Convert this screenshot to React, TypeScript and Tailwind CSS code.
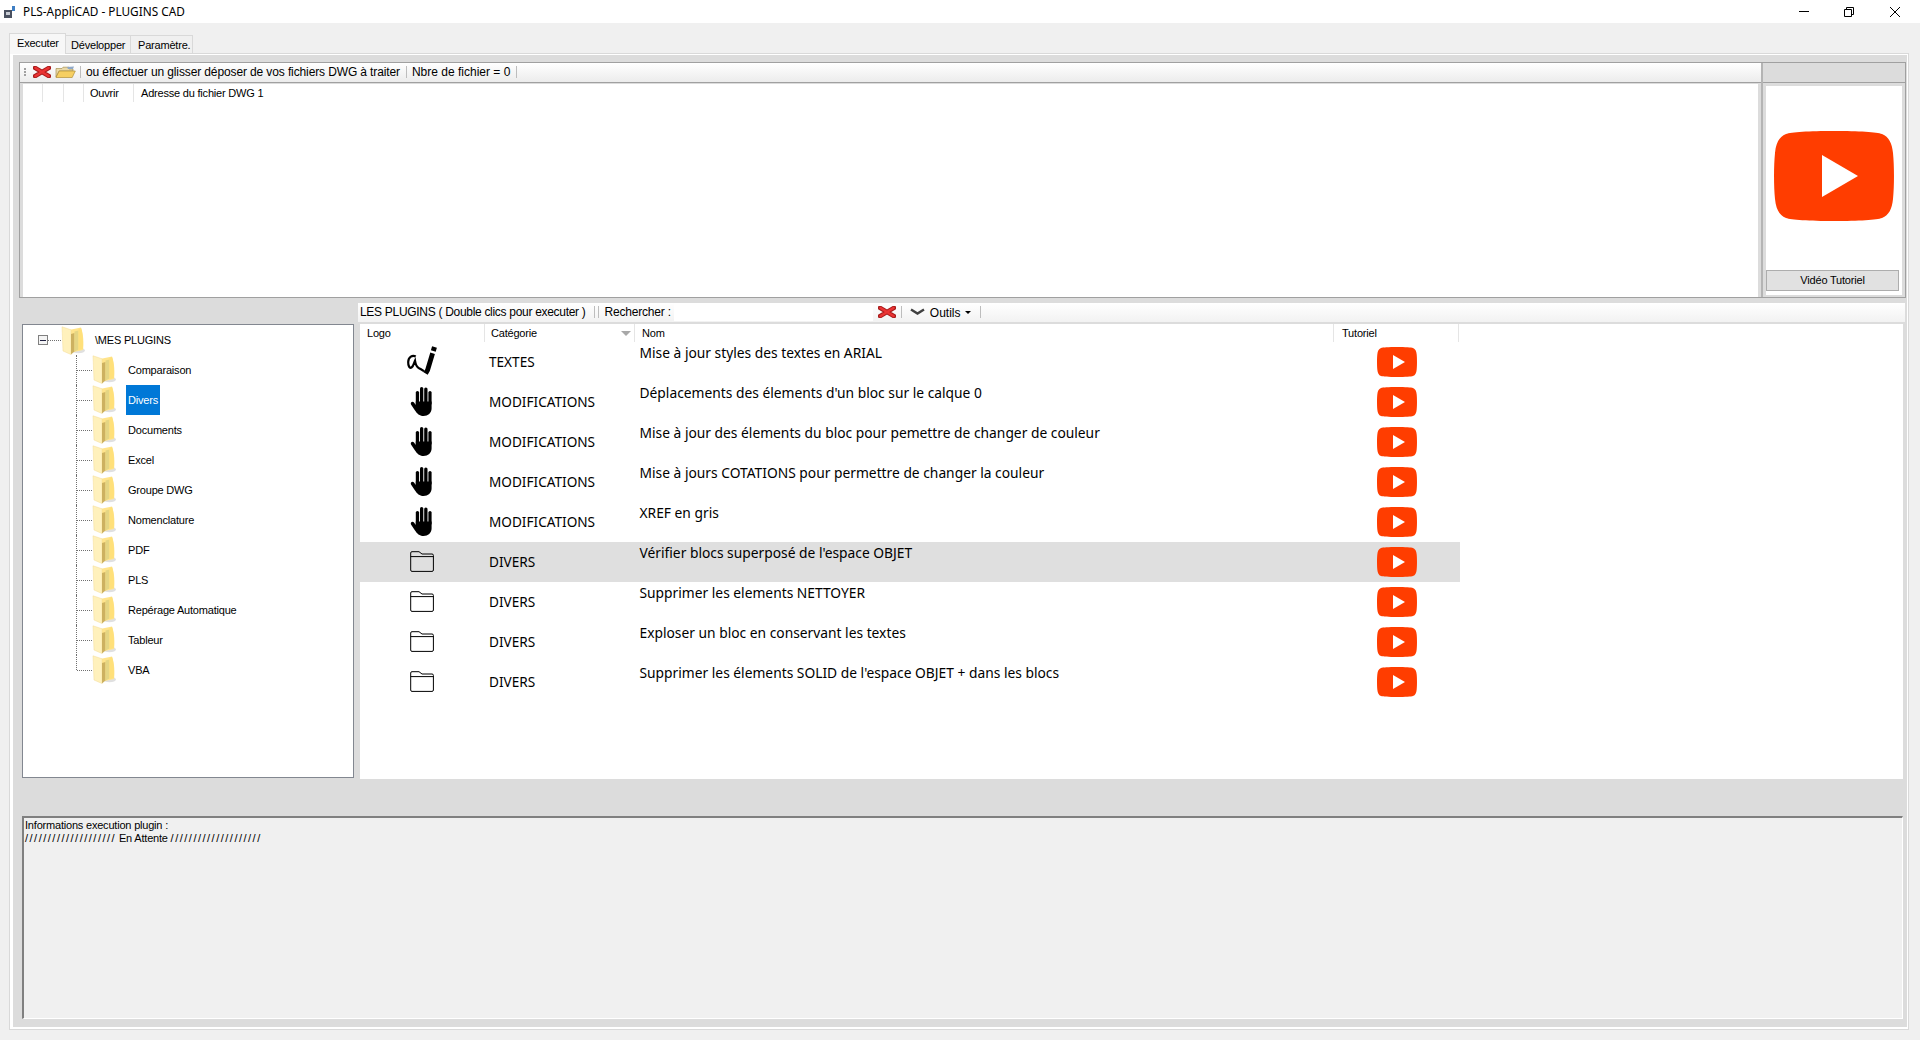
import { FC } from 'react';

const sans = "font-['Liberation_Sans',sans-serif]";
const segoe = "font-['Noto_Sans',sans-serif]";
const small = 'text-[11px] tracking-[-0.2px]';

const folders = ['Comparaison', 'Divers', 'Documents', 'Excel', 'Groupe DWG', 'Nomenclature', 'PDF', 'PLS', 'Repérage Automatique', 'Tableur', 'VBA'];

const plugins = [
  { icon: 'pen', cat: 'TEXTES', name: 'Mise à jour styles des textes en ARIAL' },
  { icon: 'hand', cat: 'MODIFICATIONS', name: "Déplacements des élements d'un bloc sur le calque 0" },
  { icon: 'hand', cat: 'MODIFICATIONS', name: 'Mise à jour des élements du bloc pour pemettre de changer de couleur' },
  { icon: 'hand', cat: 'MODIFICATIONS', name: 'Mise à jours COTATIONS pour permettre de changer la couleur' },
  { icon: 'hand', cat: 'MODIFICATIONS', name: 'XREF en gris' },
  { icon: 'folder', cat: 'DIVERS', name: "Vérifier blocs superposé de l'espace OBJET", selected: true },
  { icon: 'folder', cat: 'DIVERS', name: 'Supprimer les elements NETTOYER' },
  { icon: 'folder', cat: 'DIVERS', name: 'Exploser un bloc en conservant les textes' },
  { icon: 'folder', cat: 'DIVERS', name: "Supprimer les élements SOLID de l'espace OBJET + dans les blocs" },
];

function PlayLogo({ className }: { className: string }) {
  return (
    <svg viewBox="0 0 120 90" className={className}>
      <path
        fill="#ff3d00"
        d="M60 0C85 0 103 1 108 3C115 6 118 12 119 22C120.3 35 120.3 55 119 68C118 78 115 84 108 87C103 89 85 90 60 90C35 90 17 89 12 87C5 84 2 78 1 68C-.3 55-.3 35 1 22C2 12 5 6 12 3C17 1 35 0 60 0Z"
      />
      <polygon fill="#fff" points="48,24 84,45 48,66" />
    </svg>
  );
}

function RedCross({ className }: { className: string }) {
  return (
    <svg viewBox="0 0 18 12" className={className}>
      <path d="M2 1.8L16 10.2M16 1.8L2 10.2" stroke="#a81c1c" strokeWidth="4.4" strokeLinecap="round" />
      <path d="M2.5 2L15.5 10M15.5 2L2.5 10" stroke="#ea3434" strokeWidth="2.6" strokeLinecap="round" />
    </svg>
  );
}

function OpenFolder({ className }: { className: string }) {
  return (
    <svg viewBox="0 0 21 12" className={className}>
      <path d="M1 2.5H7L8 1.2H14V3H18V5H4L1 11Z" fill="#e9d9a8" stroke="#a89050" strokeWidth=".7" />
      <path d="M12 1L19 .5L18 3H13Z" fill="#8fa8c8" />
      <path d="M4.2 5H20.3L17.2 11.5H1Z" fill="#f6cf62" stroke="#b08f3a" strokeWidth=".7" />
    </svg>
  );
}

function TreeFolder() {
  return (
    <svg viewBox="0 0 24 29" className="w-[24px] h-[29px] shrink-0">
      <ellipse cx="17.5" cy="24.5" rx="6.5" ry="2.8" fill="#e0e0e0" />
      <path d="M8 4L20 1.5C22.5 8 22.8 18 22 24L8 27Z" fill="#ffe48c" />
      <path d="M1 .8L10 3.8V28.5L2 25Z" fill="#fff1bc" stroke="#f2dc98" strokeWidth=".5" />
      <path d="M10 8L13.5 7V25.5L10 28.5Z" fill="#cdb160" />
      <path d="M13.5 5.5L17.5 4.5V23.5L13.5 25.5Z" fill="#e4d584" />
      <path d="M17.5 3L20 2C22 8 22.3 17 21.8 23L17.5 24Z" fill="#ffe07a" />
    </svg>
  );
}

function PenIcon() {
  return (
    <svg viewBox="0 0 30 30" className="w-[30px] h-[30px]">
      <path d="M27.5 1L26.3 5" stroke="#000" strokeWidth="5" />
      <path d="M25.6 7.2L20.6 24L18.6 27.5" stroke="#000" strokeWidth="4.8" fill="none" />
      <path
        d="M8.7 10.5C5.5 8.5 1.4 11 1.2 16C1.1 20 2.5 22.6 4.5 21.5C6.5 20.4 7 16.8 8 14.7C8.5 18 9.5 21.2 12 22.2C14 23 15.5 24.2 17 25.3"
        stroke="#000"
        strokeWidth="2.2"
        fill="none"
      />
    </svg>
  );
}

function HandIcon() {
  return (
    <svg viewBox="0 0 24 30" className="w-[24px] h-[30px]">
      <rect x="5.8" y="5" width="3.3" height="15" rx="1.6" />
      <rect x="10" y="1" width="3.3" height="17" rx="1.6" />
      <rect x="14.2" y="1.5" width="3.3" height="17" rx="1.6" />
      <rect x="18.4" y="5" width="3.2" height="14" rx="1.6" />
      <path d="M5.8 15.5H21.6V22.5C21.6 27 18 30 13.5 30C9.5 30 7 27.5 5 24.5L1 18.5C0 16.5 2.5 14.8 4 16.5L5.8 19Z" />
    </svg>
  );
}

function OutlineFolder() {
  return (
    <svg viewBox="0 0 24 21" className="w-[24px] h-[21px]">
      <path
        d="M.7 19V2Q.7 .7 2 .7H9L12 3H22Q23.4 3 23.4 4.4V19Q23.4 20.4 22 20.4H2Q.7 20.4 .7 19ZM.7 5.6H23.4"
        fill="none"
        stroke="#000"
        strokeWidth="1"
      />
    </svg>
  );
}

const Sep: FC<{ className?: string }> = ({ className = '' }) => (
  <div className={`w-px h-[12px] bg-[#bdbdbd] shrink-0 ${className}`} />
);

function TreeRow({ label, selected, last }: { label: string; selected: boolean; last: boolean }) {
  return (
    <div className="flex h-[30px]">
      <div className={`ml-[53px] w-px border-l border-dotted border-[#707070] ${last ? 'h-[15px]' : 'h-[30px]'}`} />
      <div className="w-[15px] mt-[15px] h-px border-t border-dotted border-[#707070]" />
      <TreeFolder />
      <span className={`ml-[10px] px-[2px] h-[30px] leading-[30px] ${small} ${selected ? 'bg-[#0078d7] text-white' : 'text-black'}`}>
        {label}
      </span>
    </div>
  );
}

function PluginRow({ icon, cat, name, selected }: { icon: string; cat: string; name: string; selected?: boolean }) {
  return (
    <div className={`flex h-[40px] w-[1100px] ${selected ? 'bg-[#dfdfdf]' : ''}`}>
      <div className="w-[125px] flex items-center justify-center pr-[2px] pb-[2px]">
        {icon === 'pen' && <PenIcon />}
        {icon === 'hand' && <HandIcon />}
        {icon === 'folder' && <OutlineFolder />}
      </div>
      <div className={`w-[150px] pl-[4px] pt-[11px] text-[13.6px] leading-[18px] ${segoe}`}>{cat}</div>
      <div className={`w-[699px] pl-[4.5px] pt-[1.5px] text-[13.8px] leading-[18px] ${segoe}`}>{name}</div>
      <div className="w-[125px] flex items-center justify-center pb-[1px]">
        <PlayLogo className="w-[40px] h-[30px]" />
      </div>
    </div>
  );
}

export default function App() {
  return (
    <div className={`w-[1920px] h-[1040px] overflow-hidden bg-[#f0f0f0] text-black text-[12px] ${sans}`}>
      {/* Title bar */}
      <div className="h-[23px] bg-white flex items-center">
        <svg viewBox="0 0 14 14" className="w-[14px] h-[14px] ml-[3px]">
          <rect x="1" y="5" width="8" height="8" fill="#4a5160" />
          <rect x="3" y="7" width="4" height="3" fill="#c8ccd4" />
          <rect x="9" y="1" width="3" height="5" fill="#3f7fc4" />
        </svg>
        <span className={`ml-[6px] text-[11.8px] ${segoe}`}>PLS-AppliCAD - PLUGINS CAD</span>
        <div className="ml-auto flex items-center">
          <div className="w-[10px] h-px bg-black mr-[35px]" />
          <svg viewBox="0 0 10 10" className="w-[10px] h-[10px] mr-[36px]">
            <path d="M.5 2.5H7.5V9.5H.5ZM2.5 2.5V.5H9.5V7.5H7.5" fill="none" stroke="#000" strokeWidth="1" />
          </svg>
          <svg viewBox="0 0 10 10" className="w-[10px] h-[10px] mr-[20px]">
            <path d="M0 0L10 10M10 0L0 10" stroke="#000" strokeWidth="1" />
          </svg>
        </div>
      </div>

      {/* Tabs */}
      <div className={`h-[30px] flex items-end pl-[9px] ${small}`}>
        <div className="relative z-10 -mb-px h-[21px] w-[57px] bg-[#f7f7f7] border border-b-0 border-[#d9d9d9] pt-[1px] pl-[7px]">Executer</div>
        <div className="h-[18px] w-[65px] border border-b-0 border-l-0 border-[#d9d9d9] pt-[1px] pl-[5px]">Développer</div>
        <div className="h-[18px] w-[62px] border border-b-0 border-l-0 border-[#d9d9d9] pt-[1px] pl-[7px]">Paramètre.</div>
      </div>

      {/* Tab page */}
      <div className="ml-[9px] w-[1900px] h-[977px] border border-[#d9d9d9]">
        <div className="h-full border-[3px] border-t-[1px] border-r-[1px] border-b-[2px] border-white bg-[#dcdcdc]">
          {/* Upload panel */}
          <div className="ml-[6px] mt-[7px] w-[1887px] h-[236px] border border-[#a0a0a0] flex">
            <div className="w-[1743px] border-r-2 border-[#b4b4b4] flex flex-col">
              <div className="h-[17px] pb-[2px] border-b border-[#a0a0a0] bg-gradient-to-b from-white to-[#ececec] flex items-center box-content">
                <div className="ml-[4px] flex flex-col gap-[1px]">
                  <div className="w-[2px] h-[2px] bg-[#a0a0a0]" />
                  <div className="w-[2px] h-[2px] bg-[#a0a0a0]" />
                  <div className="w-[2px] h-[2px] bg-[#a0a0a0]" />
                </div>
                <RedCross className="ml-[7px] w-[18px] h-[12px]" />
                <OpenFolder className="ml-[4px] w-[21px] h-[12px]" />
                <Sep className="ml-[4px]" />
                <span className="ml-[5px] tracking-[-0.12px]">ou éffectuer un glisser déposer de vos fichiers DWG à traiter</span>
                <Sep className="ml-[6px]" />
                <span className="ml-[5px]">Nbre de fichier = 0</span>
                <Sep className="ml-[6px]" />
              </div>
              <div className="ml-[3px] mt-[1px] w-[1735px] flex-1 bg-white">
                <div className={`h-[18px] flex leading-[18px] ${small}`}>
                  <div className="w-[20px] border-r border-[#e5e5e5]" />
                  <div className="w-[21px] border-r border-[#e5e5e5]" />
                  <div className="w-[20px] border-r border-[#e5e5e5]" />
                  <div className="w-[50px] border-r border-[#e5e5e5] pl-[6px]">Ouvrir</div>
                  <div className="pl-[7px]">Adresse du fichier DWG 1</div>
                </div>
              </div>
            </div>
            <div className="flex-1 flex flex-col">
              <div className="h-[19px] border-b border-[#a0a0a0] box-content" />
              <div className="ml-[3px] mt-[3px] mr-[3px] h-[209px] bg-white flex flex-col pt-[45px]">
                <PlayLogo className="ml-[8px] w-[120px] h-[90px]" />
                <div className={`mt-auto mb-[4px] w-[133px] h-[21px] bg-[#e1e1e1] border border-[#adadad] text-center leading-[19px] ${small}`}>Vidéo Tutoriel</div>
              </div>
            </div>
          </div>

          {/* Plugins section */}
          <div className="mt-[5px] flex">
            <div className="ml-[9px] mt-[21px] w-[332px] h-[454px] bg-white border border-[#828790]">
              <div className="flex h-[30px] items-center">
                <div className="ml-[15px] w-[10px] h-[10px] border border-[#808080] bg-[#f4f4f4] flex items-center justify-center">
                  <div className="w-[6px] h-px bg-[#202040]" />
                </div>
                <div className="w-[13px] h-px border-t border-dotted border-[#707070]" />
                <TreeFolder />
                <span className={`ml-[10px] pt-[1px] ${small}`}>\MES PLUGINS</span>
              </div>
              {folders.map((f, i) => (
                <TreeRow key={f} label={f} selected={f === 'Divers'} last={i === folders.length - 1} />
              ))}
            </div>
            <div className="ml-[4px] w-[1547px]">
              <div className="h-[19px] pb-[1px] bg-gradient-to-b from-white to-[#f2f2f2] flex items-center">
                <span className="ml-[2px] tracking-[-0.3px]">LES PLUGINS ( Double clics pour executer )</span>
                <Sep className="ml-[8px]" />
                <Sep className="ml-[3px]" />
                <span className="ml-[6px] tracking-[-0.2px]">Rechercher :</span>
                <div className="ml-[3px] w-[199px] h-[18px] bg-white" />
                <RedCross className="ml-[5px] w-[18px] h-[12px]" />
                <Sep className="ml-[5px]" />
                <svg viewBox="0 0 15 8" className="ml-[8px] w-[15px] h-[8px]">
                  <path d="M1 1.5L7.5 5.5L14 1.5" fill="none" stroke="#404040" strokeWidth="2.4" />
                </svg>
                <span className="ml-[5px] mt-[2px]">Outils</span>
                <div className="ml-[5px] w-0 h-0 border-x-[3px] border-x-transparent border-t-[3px] border-t-black" />
                <Sep className="ml-[9px]" />
              </div>
              <div className="mt-[2px] ml-[2px] w-[1543px] h-[455px] bg-white">
                <div className={`h-[18px] flex leading-[18px] ${small}`}>
                  <div className="w-[125px] pl-[7px] border-r border-[#e5e5e5]">Logo</div>
                  <div className="w-[150px] pl-[6px] border-r border-[#e5e5e5] flex items-start justify-between pr-[3px]">
                    <span>Catégorie</span>
                    <div className="mt-[7px] w-0 h-0 border-x-[5px] border-x-transparent border-t-[5px] border-t-[#a8a8a8]" />
                  </div>
                  <div className="w-[699px] pl-[7px] border-r border-[#e5e5e5]">Nom</div>
                  <div className="w-[125px] pl-[8px] border-r border-[#e5e5e5]">Tutoriel</div>
                </div>
                {plugins.map((p) => (
                  <PluginRow key={p.name} {...p} />
                ))}
              </div>
            </div>
          </div>

          {/* Execution log */}
          <div className={`ml-[9px] mt-[37px] w-[1881px] h-[203px] bg-[#f0f0f0] border-t-2 border-l-2 border-[#808080] border-b border-r border-b-white border-r-white pl-[1px] pt-[1px] leading-[13px] ${small}`}>
            <div>Informations execution plugin :</div>
            <div>
              <span className="tracking-[1.5px]">////////////////////</span> En Attente <span className="tracking-[1.5px]">////////////////////</span>
            </div>
          </div>
        </div>
      </div>
    </div>
  );
}
